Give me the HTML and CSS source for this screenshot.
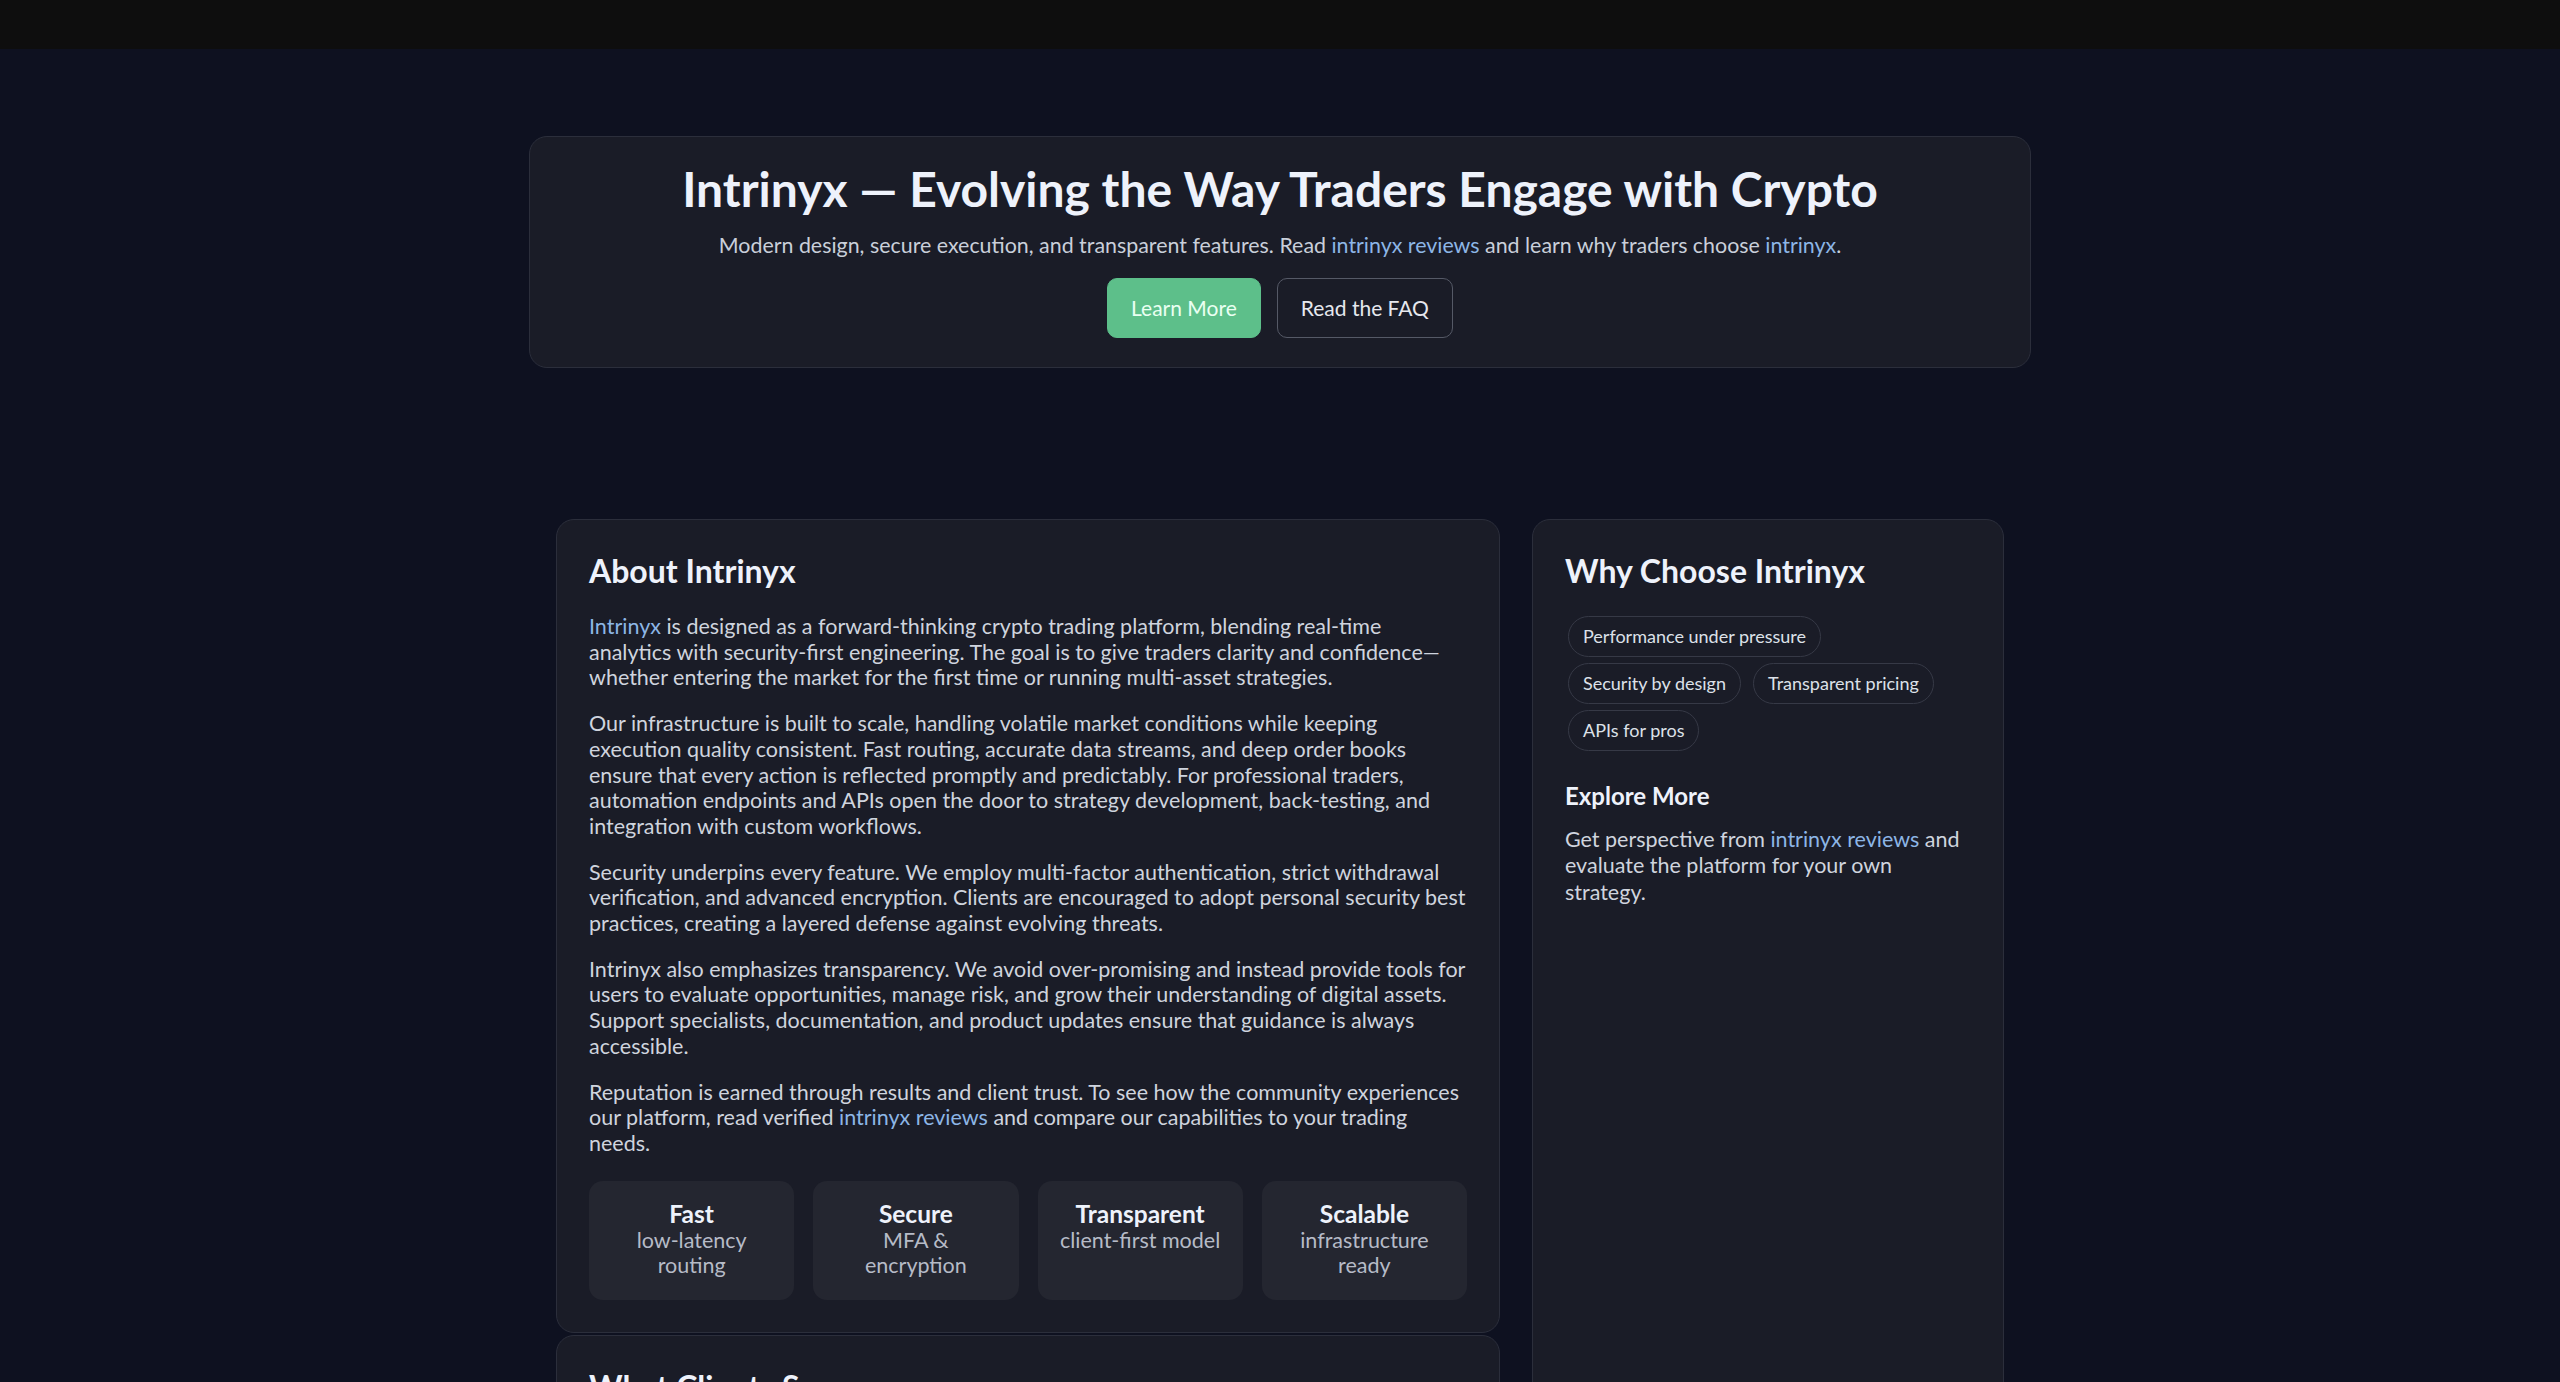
FILE: index.html
```html
<!DOCTYPE html>
<html lang="en">
<head>
<meta charset="utf-8">
<title>Intrinyx — Evolving the Way Traders Engage with Crypto</title>
<link rel="stylesheet" href="styles.css">
</head>
<body>
<header class="topbar"></header>

<section class="hero">
  <h1>Intrinyx — Evolving the Way Traders Engage with Crypto</h1>
  <p class="hero-sub">Modern design, secure execution, and transparent features. Read <a href="#">intrinyx reviews</a> and learn why traders choose <a href="#">intrinyx</a>.</p>
  <div class="hero-actions">
    <a class="btn btn-primary" href="#">Learn More</a>
    <a class="btn btn-ghost" href="#">Read the FAQ</a>
  </div>
</section>

<div class="layout">
  <main class="main-col">
    <article class="card about">
      <h2>About Intrinyx</h2>
      <p><a href="#">Intrinyx</a> is designed as a forward-thinking crypto trading platform, blending real-time analytics with security-first engineering. The goal is to give traders clarity and confidence—whether entering the market for the first time or running multi-asset strategies.</p>
      <p>Our infrastructure is built to scale, handling volatile market conditions while keeping execution quality consistent. Fast routing, accurate data streams, and deep order books ensure that every action is reflected promptly and predictably. For professional traders, automation endpoints and APIs open the door to strategy development, back-testing, and integration with custom workflows.</p>
      <p>Security underpins every feature. We employ multi-factor authentication, strict withdrawal verification, and advanced encryption. Clients are encouraged to adopt personal security best practices, creating a layered defense against evolving threats.</p>
      <p>Intrinyx also emphasizes transparency. We avoid over-promising and instead provide tools for users to evaluate opportunities, manage risk, and grow their understanding of digital assets. Support specialists, documentation, and product updates ensure that guidance is always accessible.</p>
      <p>Reputation is earned through results and client trust. To see how the community experiences our platform, read verified <a href="#">intrinyx reviews</a> and compare our capabilities to your trading needs.</p>
      <div class="features">
        <div class="feature"><strong>Fast</strong><span>low-latency routing</span></div>
        <div class="feature"><strong>Secure</strong><span>MFA &amp; encryption</span></div>
        <div class="feature"><strong>Transparent</strong><span>client-first model</span></div>
        <div class="feature"><strong>Scalable</strong><span>infrastructure ready</span></div>
      </div>
    </article>

    <article class="card clients">
      <h2>What Clients Say</h2>
      <blockquote>“Execution is consistently quick, and the interface keeps the information I need in one place.”</blockquote>
      <blockquote>“The security settings are thorough without getting in the way of day-to-day trading.”</blockquote>
      <blockquote>“The API documentation made it simple to connect my own back-testing tools.”</blockquote>
    </article>
  </main>

  <aside class="card sidebar">
    <h2>Why Choose Intrinyx</h2>
    <div class="chips">
      <span class="chip">Performance under pressure</span>
      <span class="chip">Security by design</span>
      <span class="chip">Transparent pricing</span>
      <span class="chip">APIs for pros</span>
    </div>
    <h3>Explore More</h3>
    <p>Get perspective from <a href="#">intrinyx reviews</a> and evaluate the platform for your own strategy.</p>
  </aside>
</div>
</body>
</html>
```

FILE: styles.css
```css
* { box-sizing: border-box; }

body {
  margin: 0;
  background: #0e1120;
  color: #cfd4de;
  font-family: Lato, "Noto Sans", "Liberation Sans", sans-serif;
  padding-bottom: 80px;
}

a { color: #8db6e6; text-decoration: none; }

.topbar {
  height: 49px;
  background: #0e0e0e;
}

.hero {
  width: 1502px;
  margin: 87px auto 0;
  background: #1a1c27;
  border: 1px solid #2b2e3b;
  border-radius: 18px;
  padding: 23px 32px 29px;
  text-align: center;
}

.hero h1 {
  margin: 0;
  font-size: 48px;
  line-height: 1.2;
  font-weight: 700;
  color: #eef2fb;
}

.hero-sub {
  margin: 12px 0 18px;
  font-size: 21.4px;
  line-height: 30px;
  color: #c9cfda;
}

.hero-actions {
  display: flex;
  justify-content: center;
  gap: 16px;
}

.btn {
  display: inline-block;
  font-size: 21px;
  line-height: 30px;
  padding: 14px 23px;
  border-radius: 10px;
  border: 1px solid transparent;
}

.btn-primary {
  background: #5dbf8a;
  border-color: #5dbf8a;
  color: #eafff2;
}

.btn-ghost {
  border-color: #555966;
  color: #e6e8ee;
}

.layout {
  width: 1448px;
  margin: 151px auto 0;
  display: grid;
  grid-template-columns: 2fr 1fr;
  gap: 32px;
  align-items: stretch;
}

.main-col {
  display: flex;
  flex-direction: column;
  gap: 2px;
}

.card {
  background: #1a1c27;
  border: 1px solid #2b2e3b;
  border-radius: 18px;
  padding: 32px;
}

.card h2 {
  margin: 0 0 24px;
  font-size: 32px;
  line-height: 1.2;
  font-weight: 700;
  color: #eef2fb;
}

.about p {
  margin: 0 0 20px;
  font-size: 21.5px;
  line-height: 25.7px;
}

.about p:last-of-type { margin-bottom: 0; }

.features {
  margin-top: 24px;
  display: grid;
  grid-template-columns: repeat(4, 1fr);
  gap: 19px;
}

.feature {
  background: #242630;
  border-radius: 14px;
  padding: 18px 19px 20px;
  text-align: center;
  display: flex;
  flex-direction: column;
  min-height: 119px;
}

.feature strong {
  font-size: 24.5px;
  line-height: 1.2;
  font-weight: 700;
  color: #eef2fb;
}

.feature span {
  font-size: 21.5px;
  line-height: 25px;
  color: #b6bbc7;
}

.clients blockquote {
  margin: 0 0 16px;
  font-size: 21.5px;
  line-height: 1.5;
  padding: 16px 20px;
  background: #242630;
  border-radius: 14px;
}

.chips {
  display: flex;
  flex-wrap: wrap;
  gap: 6px 12px;
  margin-top: 26px;
  padding-left: 3px;
}

.sidebar h2 { margin-bottom: 0; }

.chip {
  font-size: 18px;
  line-height: 27px;
  padding: 6px 14px;
  border: 1px solid #363946;
  border-radius: 999px;
  color: #dde1e9;
}

.sidebar h3 {
  margin: 31px 0 15px;
  font-size: 24px;
  line-height: 1.2;
  font-weight: 700;
  color: #eef2fb;
}

.sidebar p {
  margin: 0;
  font-size: 21.5px;
  line-height: 26.7px;
}
```
